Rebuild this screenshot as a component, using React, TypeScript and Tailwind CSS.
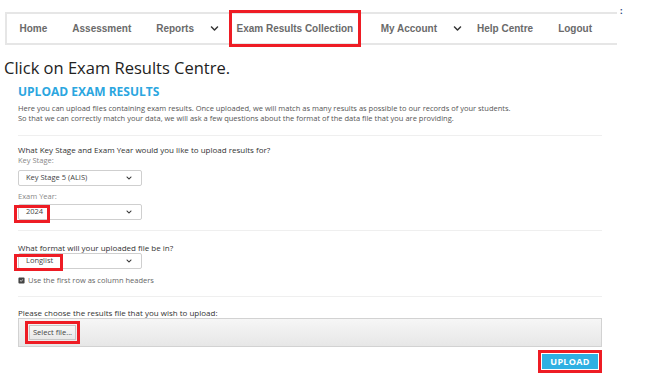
import { FaChevronDown } from "react-icons/fa";
import { FaSquareCheck } from "react-icons/fa6";

function NavItem({ label, boxed }: { label: string; boxed?: boolean }) {
  if (boxed) {
    return (
      <div className="h-[37px] -my-[2px] mx-[7px] px-[5px] border-[3px] border-[#ee1c24] flex items-center">
        <span>{label}</span>
      </div>
    );
  }
  return <div className="px-[12.5px]">{label}</div>;
}

function Select({ value, mark }: { value: string; mark?: number }) {
  return (
    <div className="relative w-[124px] h-[16px] border border-[#cfcfcf] rounded-[2px] flex items-center justify-between pl-[7px] pr-[9px] text-[7.5px] text-[#444]">
      <span>{value}</span>
      <FaChevronDown className="w-[6px] h-[6px] text-[#333]" />
      {mark ? (
        <div
          className={
            mark === 1
              ? "absolute -left-[5px] top-0 w-[36px] h-[18px] border-[3px] border-[#ee1c24]"
              : "absolute -left-[5px] top-0 w-[49px] h-[17px] border-[3px] border-[#ee1c24]"
          }
        />
      ) : null}
    </div>
  );
}

export default function App() {
  return (
    <div className="w-[659px] h-[382px] bg-white overflow-hidden font-['Open_Sans',sans-serif]">
      <div className="flex items-start">
        <nav className="mt-[12px] ml-[5px] w-[612px] h-[33px] border-y-2 border-l-2 border-[#e6e6e6] flex items-center pl-0 font-['Liberation_Sans',sans-serif] font-bold text-[10px] text-[#6a6a6a] whitespace-nowrap">
          <NavItem label="Home" />
          <NavItem label="Assessment" />
          <NavItem label="Reports" />
          <FaChevronDown className="w-[9px] h-[9px] text-[#333] mx-[3px]" />
          <NavItem label="Exam Results Collection" boxed />
          <NavItem label="My Account" />
          <FaChevronDown className="w-[9px] h-[9px] text-[#333] mx-[3px]" />
          <NavItem label="Help Centre" />
          <NavItem label="Logout" />
        </nav>
        <span className="mt-[6px] ml-[3px] text-[9px] font-bold text-[#1d3f7a] leading-none">:</span>
      </div>

      <h1 className="ml-[4px] mt-[12px] text-[16.5px] leading-[22px] text-[#222]">
        Click on Exam Results Centre.
      </h1>

      <section className="ml-[18px] w-[584px]">
        <h2 className="mt-[5px] text-[12px] leading-[16px] font-bold text-[#2ba6df]">
          UPLOAD EXAM RESULTS
        </h2>
        <p className="mt-[3px] text-[7.5px] leading-[10px] text-[#555]">
          Here you can upload files containing exam results. Once uploaded, we will match as many results as possible to our records of your students.
          <br />
          So that we can correctly match your data, we will ask a few questions about the format of the data file that you are providing.
        </p>
        <div className="mt-[12px] border-t border-[#efefef]" />

        <div className="mt-[8px] text-[8px] leading-[11px] text-[#333]">
          What Key Stage and Exam Year would you like to upload results for?
        </div>
        <div className="text-[7.5px] leading-[11px] text-[#888]">Key Stage:</div>
        <div className="mt-[4px]">
          <Select value="Key Stage 5 (ALIS)" />
        </div>
        <div className="mt-[5px] text-[7.5px] leading-[11px] text-[#888]">Exam Year:</div>
        <div className="mt-[2px]">
          <Select value="2024" mark={1} />
        </div>
        <div className="mt-[10px] border-t border-[#efefef]" />

        <div className="mt-[11px] text-[8px] leading-[11px] text-[#333]">
          What format will your uploaded file be in?
        </div>
        <div className="mt-[0px]">
          <Select value="Longlist" mark={2} />
        </div>
        <div className="mt-[6px] flex items-center gap-[3px] text-[7.5px] leading-[10px] text-[#666]">
          <FaSquareCheck className="w-[7px] h-[7px] text-[#444]" />
          <span>Use the first row as column headers</span>
        </div>
        <div className="mt-[11px] border-t border-[#efefef]" />

        <div className="mt-[10px] text-[8px] leading-[11px] text-[#333]">
          Please choose the results file that you wish to upload:
        </div>
        <div className="h-[29px] border border-[#d2d2d2] bg-gradient-to-b from-[#f6f6f6] to-[#e7e7e7] flex items-center pl-[6px]">
          <div className="p-[1px] border-[3px] border-[#ee1c24]">
            <div className="h-[15px] px-[3px] flex items-center border border-[#c6c6c6] bg-gradient-to-b from-[#f8f8f8] to-[#e8e8e8] text-[7.5px] text-[#444]">
              Select file...
            </div>
          </div>
        </div>
        <div className="mt-[3px] flex justify-end">
          <div className="border-[3px] border-[#ee1c24] p-[1px]">
            <div className="h-[15px] w-[56px] bg-[#2fb0e3] flex items-center justify-center text-[9px] font-bold tracking-[0.3px] text-white">
              UPLOAD
            </div>
          </div>
        </div>
      </section>
    </div>
  );
}
